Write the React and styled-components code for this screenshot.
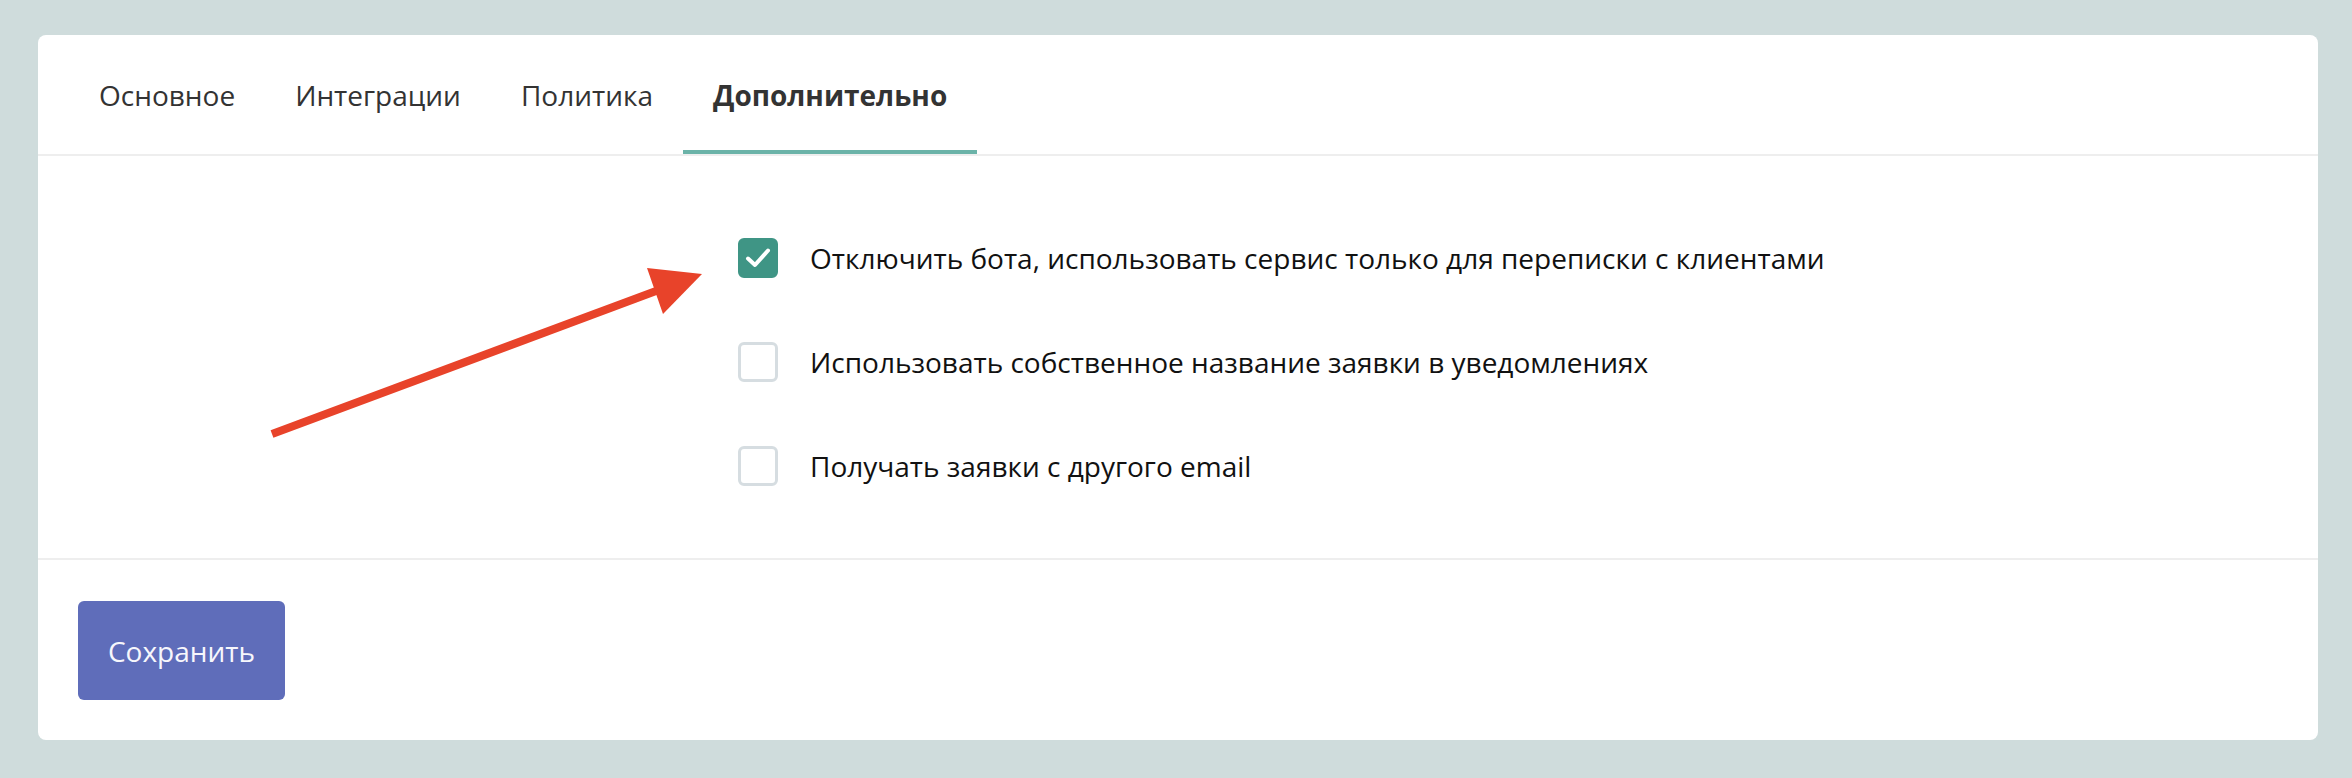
import React, { useState } from 'react';
import styled, { createGlobalStyle } from 'styled-components';

const GlobalStyle = createGlobalStyle`
  html, body {
    margin: 0;
    padding: 0;
    background: #cfdcdc;
    font-family: "Open Sans", "Liberation Sans", sans-serif;
  }
`;

const tabs = ['Основное', 'Интеграции', 'Политика', 'Дополнительно'];

const options = [
  { id: 'bot', label: 'Отключить бота, использовать сервис только для переписки с клиентами', checked: true },
  { id: 'name', label: 'Использовать собственное название заявки в уведомлениях', checked: false },
  { id: 'email', label: 'Получать заявки с другого email', checked: false },
];

function App() {
  const [active, setActive] = useState(3);
  const [values, setValues] = useState(options.map((o) => o.checked));

  const toggle = (i) => {
    setValues(values.map((v, idx) => (idx === i ? !v : v)));
  };

  return (
    <Page>
      <GlobalStyle />
      <Card>
        <TabBar>
          {tabs.map((t, i) => (
            <Tab key={t} $active={active === i} onClick={() => setActive(i)}>
              {t}
            </Tab>
          ))}
        </TabBar>

        <Body>
          {options.map((o, i) => (
            <Row key={o.id} onClick={() => toggle(i)}>
              <Box $checked={values[i]}>
                {values[i] && (
                  <svg width="28" height="28" viewBox="0 0 28 28">
                    <path d="M4 14.5 L11 21 L24 6.5" fill="none" stroke="#fff" strokeWidth="4" strokeLinecap="round" strokeLinejoin="round" />
                  </svg>
                )}
              </Box>
              <Label>{o.label}</Label>
            </Row>
          ))}
        </Body>

        <Footer>
          <SaveButton>Сохранить</SaveButton>
        </Footer>
      </Card>

      {/* red pointer drawn on top of the screenshot */}
      <Arrow width="2352" height="778" viewBox="0 0 2352 778">
        <line x1="272" y1="434" x2="656" y2="291" stroke="#e8432a" strokeWidth="8" />
        <polygon points="647,268 702,274 663,314" fill="#e8432a" />
      </Arrow>
    </Page>
  );
}

export default App;

const Page = styled.div`
  position: relative;
  box-sizing: border-box;
  width: 2352px;
  height: 778px;
  padding: 35px 34px 38px 38px;
`;

const Card = styled.div`
  background: #fff;
  border-radius: 8px;
  display: flex;
  flex-direction: column;
  height: 100%;
  overflow: hidden;
`;

const TabBar = styled.div`
  display: flex;
  padding-left: 31px;
  border-bottom: 2px solid #eeeeee;
`;

const Tab = styled.div`
  box-sizing: border-box;
  height: 119px;
  padding: 4px 30px 0;
  display: flex;
  align-items: center;
  font-size: 28px;
  color: #333;
  font-weight: ${(p) => (p.$active ? 700 : 400)};
  border-bottom: 4px solid ${(p) => (p.$active ? '#6bb3a8' : 'transparent')};
  cursor: pointer;
`;

const Body = styled.div`
  flex: 1;
  display: flex;
  flex-direction: column;
  gap: 64px;
  padding: 82px 0 0 700px;
  border-bottom: 2px solid #eeeeee;
`;

const Row = styled.label`
  display: flex;
  align-items: center;
  gap: 32px;
  height: 40px;
  cursor: pointer;
`;

const Box = styled.span`
  box-sizing: border-box;
  width: 40px;
  height: 40px;
  border-radius: 6px;
  display: flex;
  align-items: center;
  justify-content: center;
  background: ${(p) => (p.$checked ? '#3f9585' : '#fff')};
  border: 3px solid ${(p) => (p.$checked ? '#3f9585' : '#d6dde1')};
`;

const Label = styled.span`
  font-size: 28px;
  color: #111;
`;

const Footer = styled.div`
  padding: 41px 40px 40px;
`;

const SaveButton = styled.button`
  width: 207px;
  height: 99px;
  border: none;
  border-radius: 6px;
  background: #5f6dba;
  color: #f7f7fc;
  font-family: "Open Sans", "Liberation Sans", sans-serif;
  font-size: 28px;
  cursor: pointer;
`;

const Arrow = styled.svg`
  position: absolute;
  left: 0;
  top: 0;
  pointer-events: none;
`;
